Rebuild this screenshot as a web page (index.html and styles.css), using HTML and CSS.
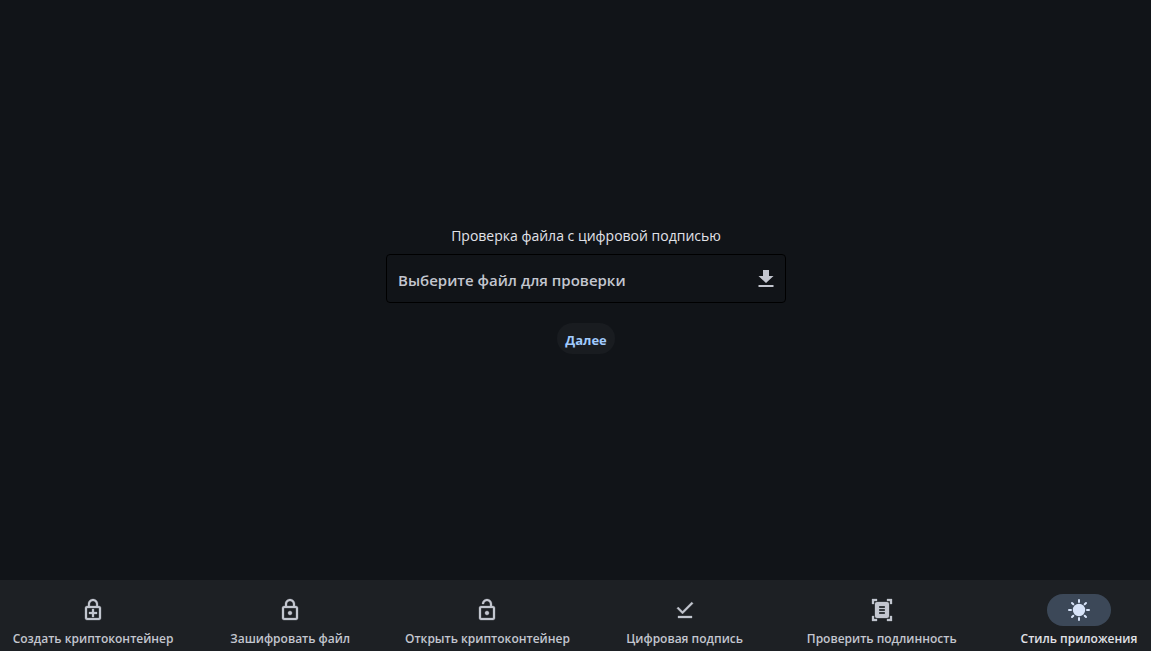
FILE: index.html
```html
<!DOCTYPE html>
<html lang="ru">
<head>
<meta charset="utf-8">
<meta name="viewport" content="width=device-width, initial-scale=1">
<title>Проверка цифровой подписи</title>
<link rel="stylesheet" href="styles.css">
</head>
<body>
<main class="page">
  <h1 class="title">Проверка файла с цифровой подписью</h1>
  <button class="picker" type="button">
    <span class="picker-label">Выберите файл для проверки</span>
    <svg class="icon" viewBox="0 0 24 24" aria-hidden="true"><path d="M19.500 9H15V3H9v6H4.500l7.500 7zM4.500 18h15v2h-15z"/></svg>
  </button>
  <button class="next" type="button">Далее</button>
</main>
<nav class="nav">
  <button class="tab" type="button">
    <span class="mark"><svg class="icon icon-bold" viewBox="0 0 24 24" aria-hidden="true"><path d="M18 8h-1V6c0-2.760-2.240-5-5-5S7 3.240 7 6v2H6c-1.100 0-2 .9-2 2v10c0 1.100.9 2 2 2h12c1.100 0 2-.9 2-2V10c0-1.100-.9-2-2-2zM8.900 6c0-1.710 1.390-3.100 3.100-3.100s3.100 1.390 3.100 3.100v2H8.900V6zM18 20H6V10h12v10zm-7-1h2v-3h3v-2h-3v-3h-2v3H8v2h3z"/></svg></span>
    <span>Создать криптоконтейнер</span>
  </button>
  <button class="tab" type="button">
    <span class="mark"><svg class="icon icon-bold" viewBox="0 0 24 24" aria-hidden="true"><path d="M18 8h-1V6c0-2.760-2.240-5-5-5S7 3.240 7 6v2H6c-1.100 0-2 .9-2 2v10c0 1.100.9 2 2 2h12c1.100 0 2-.9 2-2V10c0-1.100-.9-2-2-2zM9 6c0-1.660 1.340-3 3-3s3 1.340 3 3v2H9V6zm9 14H6V10h12v10zm-6-3c1.100 0 2-.9 2-2s-.9-2-2-2-2 .9-2 2 .9 2 2 2z"/></svg></span>
    <span>Зашифровать файл</span>
  </button>
  <button class="tab" type="button">
    <span class="mark"><svg class="icon icon-bold" viewBox="0 0 24 24" aria-hidden="true"><path d="M18 8h-1V6c0-2.760-2.240-5-5-5S7 3.240 7 6h2c0-1.660 1.340-3 3-3s3 1.340 3 3v2H6c-1.100 0-2 .9-2 2v10c0 1.100.9 2 2 2h12c1.100 0 2-.9 2-2V10c0-1.100-.9-2-2-2zm0 12H6V10h12v10zm-6-3c1.100 0 2-.9 2-2s-.9-2-2-2-2 .9-2 2 .9 2 2 2z"/></svg></span>
    <span>Открыть криптоконтейнер</span>
  </button>
  <button class="tab" type="button">
    <span class="mark"><svg class="icon icon-bold" viewBox="0 0 24 24" aria-hidden="true"><path d="M20.130 5.410L18.720 4l-9.190 9.190-4.250-4.240-1.410 1.410 5.660 5.660zM5 18h14v2H5z"/></svg></span>
    <span>Цифровая подпись</span>
  </button>
  <button class="tab" type="button">
    <span class="mark"><svg class="icon icon-bold" viewBox="0 0 24 24" aria-hidden="true"><path fill-rule="evenodd" d="M7 3H4v3H2V1h5zm15 3V1h-5v2h3v3zM7 21H4v-3H2v5h5zm13-3v3h-3v2h5v-5zM17 4c1.100 0 2 .9 2 2v12c0 1.100-.9 2-2 2H7c-1.100 0-2-.9-2-2V6c0-1.100.9-2 2-2zM9 8v2h6V8zm0 3v2h6v-2zm0 3v2h6v-2z"/></svg></span>
    <span>Проверить подлинность</span>
  </button>
  <button class="tab tab-active" type="button" aria-current="page">
    <span class="mark"><svg class="icon" viewBox="0 0 24 24" aria-hidden="true"><circle cx="12" cy="12" r="6.200"/><path class="rays" d="M12 2v2M12 20v2M2 12h2M20 12h2M5 5l1.300 1.300M17.700 17.700L19 19M5 19l1.300-1.300M17.700 6.300L19 5"/></svg></span>
    <span>Стиль приложения</span>
  </button>
</nav>
</body>
</html>
```
FILE: styles.css
```css
* {
  box-sizing: border-box;
}

body {
  margin: 0;
  min-height: 100vh;
  display: flex;
  flex-direction: column;
  background: #111418;
  color: #e1e2e8;
  font-family: "Open Sans", "Noto Sans", sans-serif;
}

button {
  border: 0;
  font-family: inherit;
  cursor: pointer;
}

.page {
  flex: 1;
  display: flex;
  flex-direction: column;
  align-items: center;
  justify-content: center;
  padding-left: 21px;
}

.title {
  margin: 0 0 8px;
  font-size: 14px;
  line-height: 20px;
  font-weight: 400;
}

.picker {
  width: 100%;
  max-width: 400px;
  height: 49px;
  display: flex;
  align-items: center;
  justify-content: space-between;
  padding: 0 7px 0 11px;
  border: 1px solid #000;
  border-radius: 4px;
  background: transparent;
  color: #c3c6cf;
  font-size: 15px;
  line-height: 24px;
  font-weight: 600;
}

.picker-label {
  padding-top: 2px;
}

.icon {
  width: 24px;
  height: 24px;
  fill: currentColor;
}

.icon-bold {
  stroke: currentColor;
  stroke-width: 0.3;
}

.next {
  margin-top: 20px;
  height: 31px;
  padding: 2px 8px 0;
  border-radius: 16px;
  background: #191c20;
  color: #a0cafd;
  font-size: 13px;
  line-height: 20px;
  font-weight: 700;
}

.nav {
  display: grid;
  grid-template-columns: repeat(6, minmax(0, 1fr));
  gap: 53px;
  padding: 14px 0 4px 21px;
  background: #1d2024;
}

.tab {
  display: flex;
  flex-direction: column;
  align-items: center;
  gap: 4px;
  padding: 0;
  background: transparent;
  color: #c3c6cf;
  font-size: 12px;
  line-height: 17px;
  font-weight: 600;
  white-space: nowrap;
}

.mark {
  width: 64px;
  height: 32px;
  display: flex;
  align-items: center;
  justify-content: center;
  border-radius: 16px;
}

.tab-active {
  color: #e1e2e8;
}

.tab-active .mark {
  background: #3c4858;
  color: #d7e3f8;
}

.rays {
  fill: none;
  stroke: currentColor;
  stroke-width: 2;
  stroke-linecap: round;
}
```
